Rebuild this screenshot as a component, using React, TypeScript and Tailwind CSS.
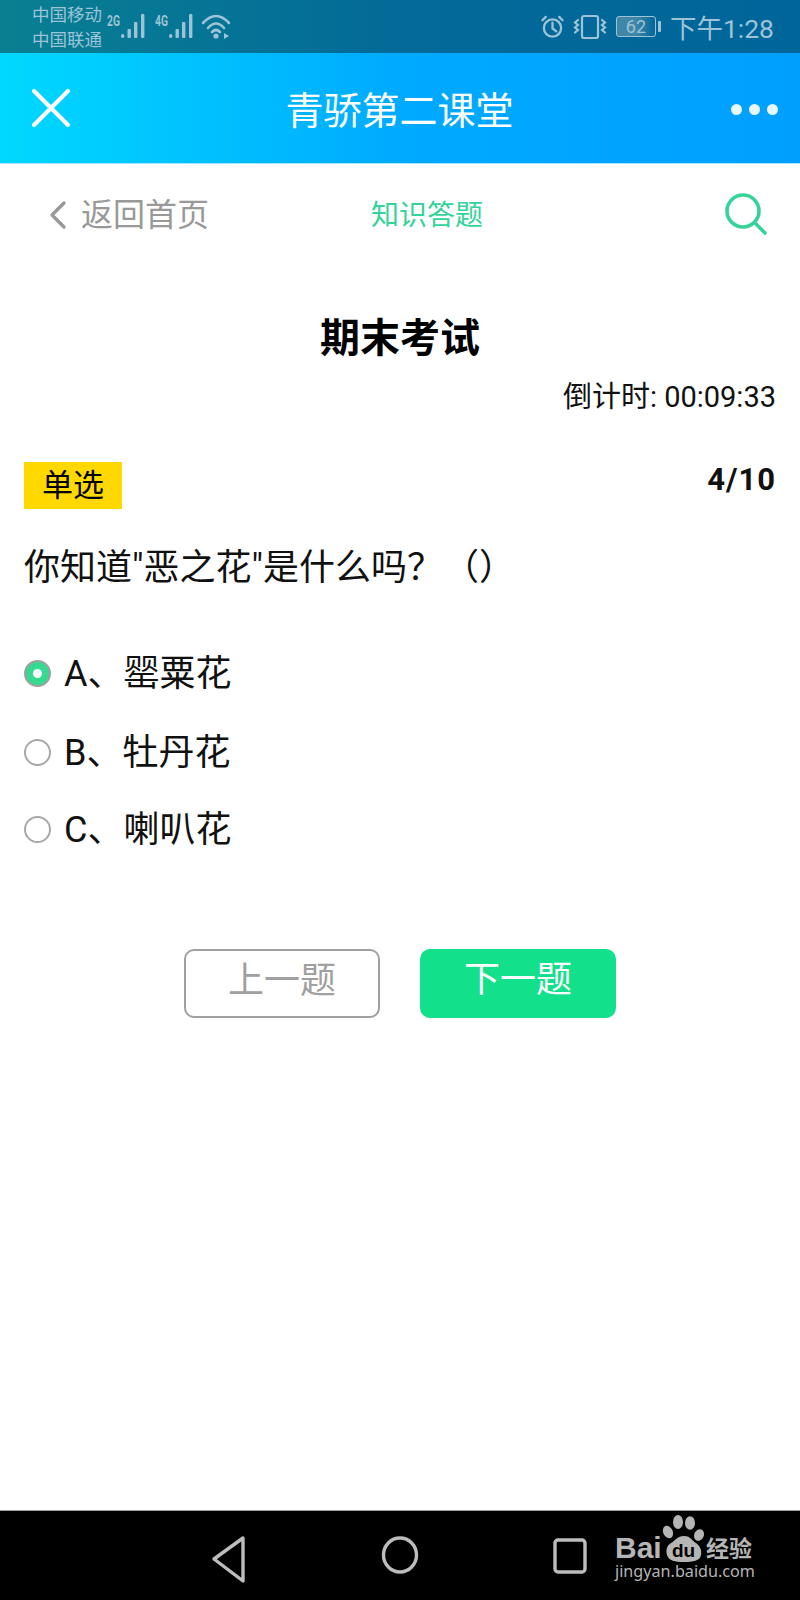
export default function App() {
  const sans = 'Roboto,"Noto Sans CJK SC",sans-serif';
  const opts = [
    { t: "A、罂粟花", on: true, cls: "h-[47px] mb-[32px]" },
    { t: "B、牡丹花", on: false, cls: "h-[47px] mb-[30px]" },
    { t: "C、喇叭花", on: false, cls: "h-[47px]" },
  ];
  return (
    <div className="w-[800px] h-[1600px] flex flex-col bg-white overflow-hidden" style={{ fontFamily: sans }}>
      <div className="h-[53px] shrink-0 flex items-center justify-between pl-[32px] pr-[26px] bg-gradient-to-r from-[#0a7f92] via-[#046a98] to-[#00659a] text-[#9cc4d6]">
        <div className="flex items-center">
          <div className="text-[17.5px] leading-[25px] w-[68px] whitespace-nowrap mt-[2px]">
            <div>中国移动</div>
            <div>中国联通</div>
          </div>
          <svg width="140" height="53" viewBox="100 0 140 53" fill="currentColor">
            <text x="107" y="26" fontSize="14" fontWeight="700" textLength="13" lengthAdjust="spacingAndGlyphs" fontFamily="Roboto">2G</text>
            <rect x="121" y="34" width="3.4" height="4" rx="1.7" />
            <rect x="127.5" y="29" width="3.4" height="9" rx="1" />
            <rect x="134" y="22" width="3.4" height="16" rx="1" />
            <rect x="141" y="14" width="3.4" height="24" rx="1" />
            <text x="155" y="26" fontSize="14" fontWeight="700" textLength="13" lengthAdjust="spacingAndGlyphs" fontFamily="Roboto">4G</text>
            <rect x="169" y="34" width="3.4" height="4" rx="1.7" />
            <rect x="175.5" y="29" width="3.4" height="9" rx="1" />
            <rect x="182" y="22" width="3.4" height="16" rx="1" />
            <rect x="189" y="14" width="3.4" height="24" rx="1" />
            <g fill="none" stroke="currentColor" strokeWidth="2.6" strokeLinecap="round">
              <path d="M203 23 Q216 9 229 23" />
              <path d="M208 28 Q216 19 224 28" />
              <path d="M212 32 Q216 28 220 32" />
            </g>
            <circle cx="216" cy="36" r="2.6" />
            <path d="M224 33 L229 36 L224 39 Z" />
          </svg>
        </div>
        <div className="flex items-center">
          <svg width="25" height="26" viewBox="0 0 26 26" fill="none" stroke="currentColor" strokeWidth="2.4" strokeLinecap="round" className="mr-[8px]">
            <circle cx="13" cy="14" r="9" />
            <path d="M13 8.5V14.5L17 17.5" />
            <path d="M2.5 6L6 2.5M23.5 6L20 2.5" />
          </svg>
          <svg width="34" height="26" viewBox="0 0 34 26" fill="none" stroke="currentColor" strokeWidth="2.2" strokeLinecap="round" className="mr-[9px]">
            <rect x="9" y="2" width="16" height="22" rx="2" />
            <path d="M5 6L2 8.5L5 11L2 13.5L5 16L2 18.5M29 6L32 8.5L29 11L32 13.5L29 16L32 18.5" />
          </svg>
          <div className="relative flex items-center mr-[9px]">
            <div className="w-[40px] h-[21px] rounded-[3px] border border-[#9cc4d6] text-[18px] leading-[19px] text-center overflow-hidden bg-gradient-to-r from-[#3f87a8] via-[#3f87a8] to-transparent">62</div>
            <div className="w-[3px] h-[11px] bg-[#9cc4d6] ml-[2px] rounded-[1px]" />
          </div>
          <div className="text-[26.5px] leading-[53px] mt-[3px]">下午1:28</div>
        </div>
      </div>
      <div className="h-[111px] shrink-0 flex items-center justify-between pl-[31px] pr-[22px] bg-gradient-to-r from-[#00d8ff] via-[#00aaff] to-[#009fff] text-white border-b border-[#a8e4ff]">
        <svg width="40" height="40" viewBox="0 0 40 40" stroke="currentColor" strokeWidth="4.2" strokeLinecap="round">
          <path d="M3 3L37 37M37 3L3 37" />
        </svg>
        <div className="text-[38px] leading-none -ml-[3px] mt-[6px]">青骄第二课堂</div>
        <div className="flex gap-[7px] mt-[2px]">
          <div className="w-[11px] h-[11px] rounded-full bg-[#e8f6ff]" />
          <div className="w-[11px] h-[11px] rounded-full bg-[#e8f6ff]" />
          <div className="w-[11px] h-[11px] rounded-full bg-[#e8f6ff]" />
        </div>
      </div>
      <div className="h-[100px] shrink-0 flex items-center pl-[49px] pr-[32px]">
        <div className="flex items-center text-[#999999] w-[322px]">
          <svg width="18" height="30" viewBox="0 0 18 30" fill="none" stroke="currentColor" strokeWidth="3.4" strokeLinecap="round" strokeLinejoin="round" className="mr-[14px] mt-[2px]">
            <path d="M15 3L3 15L15 27" />
          </svg>
          <span className="text-[32px] leading-none mt-[1px]">返回首页</span>
        </div>
        <div className="text-[28px] leading-none text-[#35d39a] mt-[3px]">知识答题</div>
        <svg width="44" height="44" viewBox="0 0 44 44" fill="none" stroke="#35d39a" strokeWidth="3.6" strokeLinecap="round" className="ml-auto">
          <circle cx="19" cy="19" r="16" />
          <path d="M31 31L41 41" />
        </svg>
      </div>
      <div className="pt-[50px] text-center text-[40px] leading-[50px] font-bold text-black">期末考试</div>
      <div className="mt-[15px] pr-[24px] text-right text-[29px] leading-[36px] text-[#111111]">倒计时: 00:09:33</div>
      <div className="mt-[47px] px-[24px] flex items-start justify-between">
        <div className="w-[98px] h-[47px] bg-[#ffd800] text-[31px] leading-[47px] text-center text-black">单选</div>
        <div className="text-[31px] font-bold text-[#111111] leading-[36px] tracking-[1px]">4/10</div>
      </div>
      <div className="mt-[34px] px-[24px] text-[36px] leading-[50px] text-[#111111]">你知道"恶之花"是什么吗？（）</div>
      <div className="mt-[57px] px-[24px] flex flex-col">
        {opts.map((o) => (
          <div key={o.t} className={`flex items-center ${o.cls}`}>
            {o.on ? (
              <div className="w-[27px] h-[27px] rounded-full bg-[#35d98f] border-2 border-[#a0a0a0] flex items-center justify-center">
                <div className="w-[9px] h-[9px] rounded-full bg-white" />
              </div>
            ) : (
              <div className="w-[27px] h-[27px] rounded-full bg-white border-2 border-[#a8a8a8]" />
            )}
            <span className="ml-[13px] text-[36px] leading-none text-[#111111]">{o.t}</span>
          </div>
        ))}
      </div>
      <div className="mt-[96px] flex justify-center gap-[40px]">
        <div className="w-[196px] h-[69px] rounded-[10px] border-2 border-[#a0a0a0] text-[#a0a0a0] text-[36px] leading-[60px] text-center">上一题</div>
        <div className="w-[196px] h-[69px] rounded-[10px] bg-[#13e08a] text-white text-[36px] leading-[62px] text-center">下一题</div>
      </div>
      <div className="flex-1" />
      <div className="h-[90px] shrink-0 bg-black border-t border-[#a0a0a0] relative flex items-center">
        <svg width="800" height="90" viewBox="0 0 800 90" fill="none" stroke="#bdbdbd" strokeWidth="3.4" strokeLinejoin="round">
          <path d="M243 27L214 48L243 70Z" />
          <ellipse cx="400" cy="44" rx="16.5" ry="17" />
          <rect x="555" y="29" width="30" height="32" rx="3" />
        </svg>
        <svg width="170" height="95" viewBox="0 0 170 95" className="absolute left-[600px] top-[-6px]" fill="#b5b5b5">
          <ellipse cx="68" cy="27" rx="4.8" ry="6.5" transform="rotate(-25 68 27)" />
          <ellipse cx="78" cy="17" rx="5" ry="7" />
          <ellipse cx="90" cy="18" rx="5" ry="6.8" />
          <ellipse cx="99" cy="30" rx="4.8" ry="6" transform="rotate(25 99 30)" />
          <path d="M84 31C77 31 75 36 71 38C66 41 66 46 67 50C69 56 75 57 84 57C93 57 100 56 101 50C102 45 100 41 96 38C92 36 91 31 84 31Z" />
          <text x="15" y="53" fontSize="30" fontWeight="700" fontFamily="Liberation Sans">Bai</text>
          <text x="72" y="52" fontSize="19" fontWeight="700" fontFamily="Liberation Sans" fill="#000000" textLength="23">du</text>
          <text x="106" y="52" fontSize="23" fontWeight="700" fontFamily="Noto Sans CJK SC">经验</text>
          <text x="15" y="72" fontSize="17" fontFamily="Noto Sans" textLength="140" lengthAdjust="spacingAndGlyphs">jingyan.baidu.com</text>
        </svg>
      </div>
    </div>
  );
}
